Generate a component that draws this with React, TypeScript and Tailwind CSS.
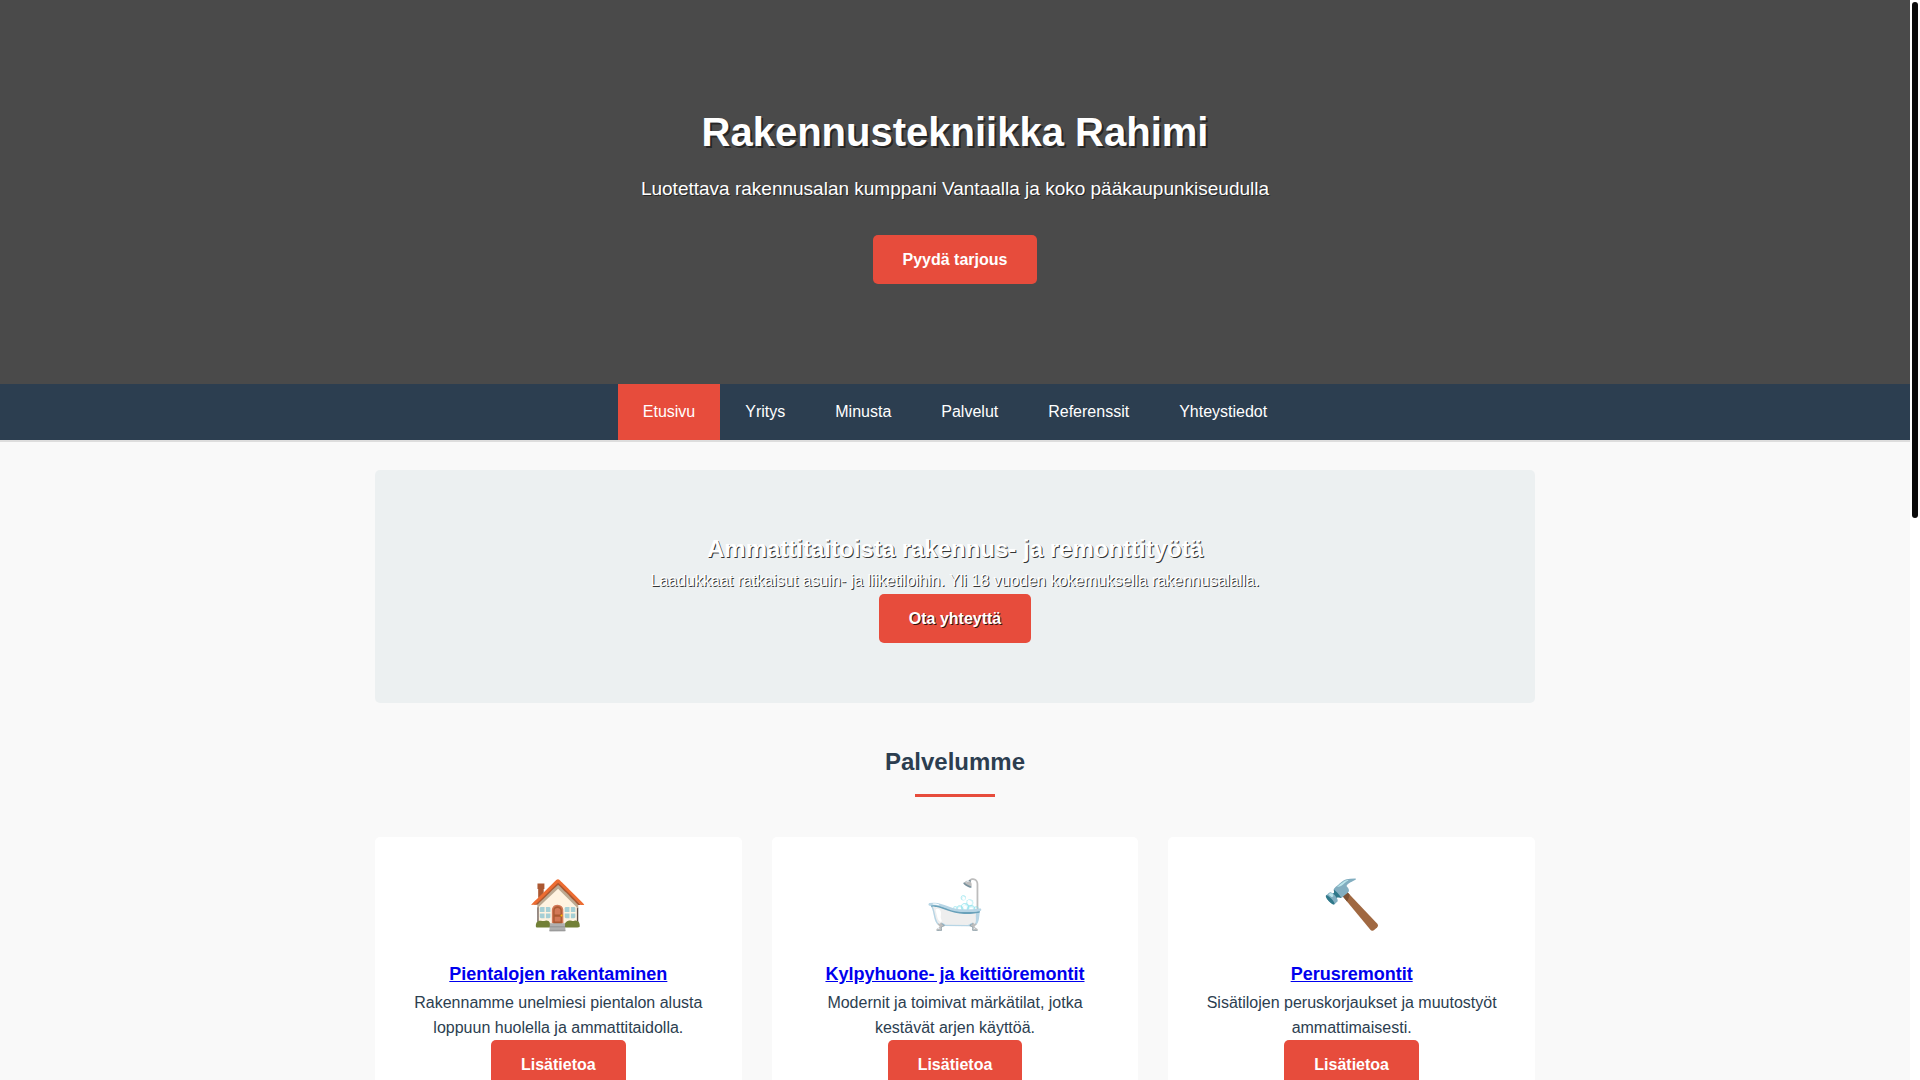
const navItems = [
  { label: 'Etusivu', href: '#etusivu' },
  { label: 'Yritys', href: '#yritys' },
  { label: 'Minusta', href: '#minusta' },
  { label: 'Palvelut', href: '#palvelut' },
  { label: 'Referenssit', href: '#referenssit' },
  { label: 'Yhteystiedot', href: '#yhteystiedot' },
];

const services = [
  {
    icon: '🏠',
    title: 'Pientalojen rakentaminen',
    text: 'Rakennamme unelmiesi pientalon alusta loppuun huolella ja ammattitaidolla.',
    href: '#pientalot',
  },
  {
    icon: '🛁',
    title: 'Kylpyhuone- ja keittiöremontit',
    text: 'Modernit ja toimivat märkätilat, jotka kestävät arjen käyttöä.',
    href: '#kylpyhuoneet',
  },
  {
    icon: '🔨',
    title: 'Perusremontit',
    text: 'Sisätilojen peruskorjaukset ja muutostyöt ammattimaisesti.',
    href: '#perusremontit',
  },
];

function Button({ href, children }: { href: string; children: string }) {
  return (
    <a
      href={href}
      className="inline-block align-top rounded-[5px] bg-[#e74c3c] px-[30px] py-3 font-bold leading-[25px] text-white hover:bg-[#c0392b]"
    >
      {children}
    </a>
  );
}

function Header() {
  return (
    <header className="bg-[#4a4a4a] px-5 py-[100px] text-center text-white">
      <h1 className="mb-[10px] text-[40px] font-bold leading-[64px] [text-shadow:2px_2px_0_rgba(0,0,0,0.5)]">
        Rakennustekniikka Rahimi
      </h1>
      <p className="mb-[31px] text-[19px] leading-[30px] [text-shadow:1px_1px_0_rgba(0,0,0,0.5)]">
        Luotettava rakennusalan kumppani Vantaalla ja koko pääkaupunkiseudulla
      </p>
      <Button href="#tarjous">Pyydä tarjous</Button>
    </header>
  );
}

function Nav() {
  return (
    <nav className="bg-[#2c3e50] shadow-[0_2px_0_#dddddd]">
      <ul className="flex flex-wrap justify-center">
        {navItems.map((item, i) => (
          <li key={item.label}>
            <a
              href={item.href}
              className={`block px-[25px] py-[15px] text-white hover:bg-[#e74c3c] ${i === 0 ? 'bg-[#e74c3c]' : ''}`}
            >
              {item.label}
            </a>
          </li>
        ))}
      </ul>
    </nav>
  );
}

export default function App() {
  return (
    <div className="flex h-screen overflow-hidden bg-[#f9f9f9] font-['Liberation_Sans',Arial,sans-serif] text-base leading-[26px] text-[#2c3e50]">
      <div className="min-w-0 flex-1">
        <Header />
        <Nav />

        <main className="mx-auto max-w-[1200px] px-5 py-[30px]">
          <section className="mb-10 rounded-[5px] bg-[#ecf0f1] px-5 py-[60px] text-center text-white [text-shadow:1px_1px_0_rgba(0,0,0,0.8)]">
            <h2 className="text-2xl font-bold leading-[38px]">
              Ammattitaitoista rakennus- ja remonttityötä
            </h2>
            <p>Laadukkaat ratkaisut asuin- ja liiketiloihin. Yli 18 vuoden kokemuksella rakennusalalla.</p>
            <Button href="#yhteystiedot">Ota yhteyttä</Button>
          </section>

          <section>
            <h2 className="mb-10 text-center text-2xl font-bold leading-[38px] after:mx-auto after:mt-[13px] after:block after:h-[3px] after:w-20 after:bg-[#e74c3c]">
              Palvelumme
            </h2>
            <div className="grid grid-cols-1 gap-[30px] md:grid-cols-3">
              {services.map((service) => (
                <article key={service.title} className="rounded-[5px] bg-white p-[30px] text-center">
                  <div className="mb-4 text-5xl leading-[76px]">{service.icon}</div>
                  <h3 className="text-lg font-bold leading-[31px]">
                    <a href={service.href} className="text-[#0000ee] underline">
                      {service.title}
                    </a>
                  </h3>
                  <p className="leading-[25px]">{service.text}</p>
                  <Button href={service.href}>Lisätietoa</Button>
                </article>
              ))}
            </div>
          </section>
        </main>
      </div>

      {/* scroll track */}
      <div className="w-[10px] shrink-0 bg-white p-[2px]">
        <div className="h-[48%] rounded-full bg-[#0a0a0a]" />
      </div>
    </div>
  );
}
